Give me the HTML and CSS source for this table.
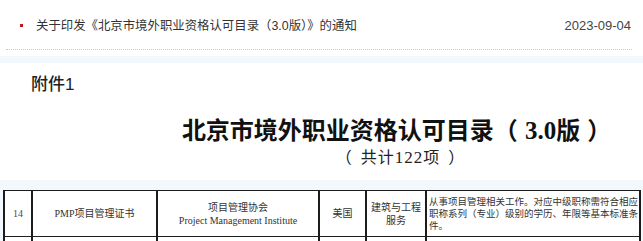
FILE: index.html
```html
<!DOCTYPE html>
<html lang="zh-CN">
<head>
<meta charset="utf-8">
<title>关于印发《北京市境外职业资格认可目录（3.0版）》的通知</title>
<link rel="stylesheet" href="styles.css">
</head>
<body>
<div class="news">
  <ul class="news-list">
    <li class="news-item">
      <span class="bullet"></span>
      <a class="news-title" href="#">关于印发《北京市境外职业资格认可目录（3.0版）》的通知</a>
      <span class="news-date">2023-09-04</span>
    </li>
  </ul>
</div>
<div class="article">
  <div class="att-label">附件1</div>
  <div class="doc-title">北京市境外职业资格认可目录（<span class="num">3.0</span>版<span class="sp"></span>）</div>
  <div class="doc-sub">（<span class="sp2"></span>共计<span class="num">122</span>项<span class="sp2"></span>）</div>
</div>
<div class="table-wrap">
  <table class="cert-table">
    <colgroup>
      <col class="c1"><col class="c2"><col class="c3"><col class="c4"><col class="c5"><col class="c6">
    </colgroup>
    <tr>
      <td class="idx">14</td>
      <td>PMP项目管理证书</td>
      <td>项目管理协会<br>Project Management Institute</td>
      <td>美国</td>
      <td>建筑与工程<br>服务</td>
      <td class="desc">从事项目管理相关工作。对应中级职称需符合相应职称系列（专业）级别的学历、年限等基本标准条件。</td>
    </tr>
    <tr class="next">
      <td></td><td></td><td></td><td></td><td></td><td></td>
    </tr>
  </table>
</div>
</body>
</html>
```
FILE: styles.css
```css
html, body {
  margin: 0;
  padding: 0;
}
body {
  width: 643px;
  height: 241px;
  overflow: hidden;
  background: #f3f8fd;
  font-family: "Liberation Sans", "Noto Sans CJK SC", sans-serif;
  color: #333;
}
.news {
  background: #fff;
  height: 56px;
}
.news-list {
  list-style: none;
  margin: 0 11px 0 6px;
  padding: 0;
}
.news-item {
  display: flex;
  align-items: center;
  height: 48px;
  padding-top: 1px;
  border-bottom: 1px dotted #c8c8c8;
  font-size: 13px;
}
.bullet {
  width: 3px;
  height: 3px;
  background: #c4161c;
  margin-left: 14px;
  margin-right: 13px;
  flex: none;
}
.news-title {
  color: #333;
  text-decoration: none;
  font-size: 12.4px;
  flex: 1;
}
.news-date {
  color: #444;
  margin-right: 1px;
  font-family: "Liberation Sans", sans-serif;
}
.article {
  background: #fff;
  margin-top: 7px;
  height: 117px;
  overflow: hidden;
}
.att-label {
  margin-top: 11px;
  padding-left: 31px;
  font-size: 17px;
  line-height: 22px;
  color: #222;
  font-weight: 500;
}
.doc-title {
  margin-top: 20px;
  padding-left: 150px;
  text-align: center;
  font-family: "Liberation Serif", "Noto Sans CJK SC", serif;
  font-weight: bold;
  font-size: 24px;
  line-height: 30px;
  color: #111;
}
.doc-title .num {
  font-size: 25px;
  padding-left: 7px;
}
.doc-title .sp {
  display: inline-block;
  width: 7px;
}
.doc-sub {
  margin-top: 2px;
  padding-left: 158px;
  text-align: center;
  font-family: "Liberation Serif", "Noto Sans CJK SC", serif;
  font-size: 16px;
  line-height: 20px;
  letter-spacing: 1px;
  color: #222;
}
.doc-sub .num {
  font-size: 17px;
}
.doc-sub .sp2 {
  display: inline-block;
  width: 8px;
}
.table-wrap {
  padding: 10px 0 0 3px;
}
.cert-table {
  border-collapse: collapse;
  table-layout: fixed;
  width: 636px;
  background: #fff;
  font-family: "Liberation Serif", "Noto Sans CJK SC", serif;
  font-size: 10px;
  color: #333;
}
.c1 { width: 28px; }
.c2 { width: 125px; }
.c3 { width: 162px; }
.c4 { width: 47px; }
.c5 { width: 60px; }
.c6 { width: 214px; }
.cert-table td {
  border: 1px solid #1c1c1c;
  border-left-width: 2px;
  border-right-width: 2px;
  height: 45px;
  padding: 0;
  text-align: center;
  vertical-align: middle;
  line-height: 13px;
}
.cert-table td.idx {
  color: #5b3a62;
}
.cert-table td.desc {
  text-align: left;
  font-size: 9.5px;
  line-height: 12px;
  padding: 0 1px 0 2px;
}
.cert-table tr.next td {
  height: 40px;
}
```
